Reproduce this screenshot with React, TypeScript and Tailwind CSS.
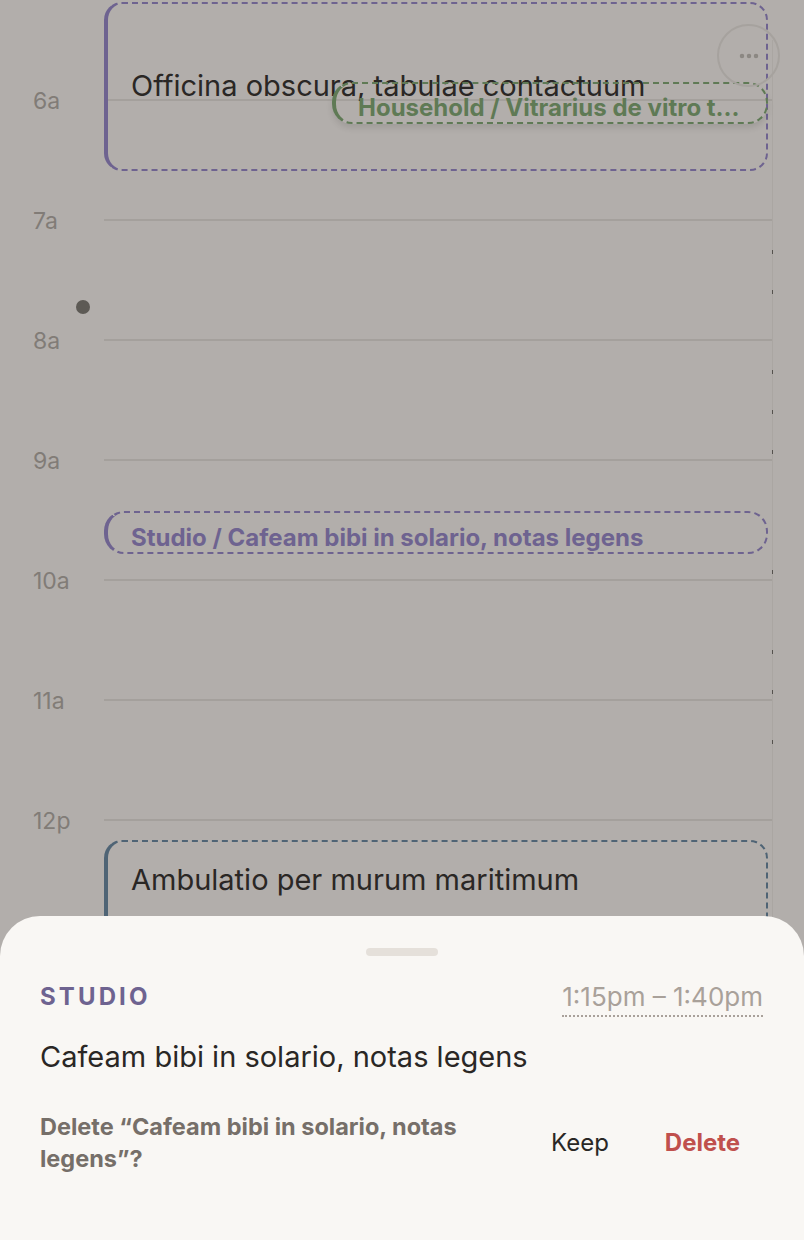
import { MoreHorizontal } from 'lucide-react';

const HOURS = ['6a', '7a', '8a', '9a', '10a', '11a', '12p'];

const font = { fontFamily: 'Inter, "Noto Sans", sans-serif' };

export default function App() {
  return (
    <div className="relative h-[1240px] w-[804px] overflow-hidden bg-[#b2aeab]" style={font}>
      {/* Time grid */}
      <div className="flex flex-col pt-[40px]">
        {HOURS.map((h) => (
          <div key={h} className="flex h-[120px] items-center">
            <div className="w-[104px] pl-[33px] pt-[3px] text-[23px] leading-none text-[#817c77]">{h}</div>
            <div className="h-[2px] w-[668px] bg-[#a4a09c]" />
            <div className="h-full w-px bg-[#aaa6a2]" />
          </div>
        ))}
        <div className="flex h-[240px]">
          <div className="w-[772px]" />
          <div className="h-full w-px bg-[#aaa6a2]" />
        </div>
      </div>

      {/* scroll track ticks */}
      {[250, 290, 370, 410, 450, 570, 650, 690, 740].map((y) => (
        <div
          key={y}
          className="absolute left-[772px] h-[4px] w-px bg-[#55524e]"
          style={{ top: y }}
        />
      ))}

      {/* now dot */}
      <div className="absolute left-[76px] top-[300px] h-[14px] w-[14px] rounded-full bg-[#5d5a55]" />

      {/* Officina event */}
      <EventBox top={2} height={169} left={104} color="#6e6390" radius={18}>
        <div className="pl-[23px] pt-[64px] text-[29px] leading-[36px] text-[#2a2725]">
          Officina obscura, tabulae contactuum
        </div>
      </EventBox>

      {/* Household pill */}
      <EventBox top={82} height={42} left={332} color="#5f7a55" radius={20} shadow>
        <div className="whitespace-nowrap pl-[22px] pt-[9px] text-[24px] font-bold leading-[30px] text-[#5f7a55]">
          Household / Vitrarius de vitro t...
        </div>
      </EventBox>

      {/* more button */}
      <div className="absolute left-[717px] top-[24px] flex h-[63px] w-[63px] items-center justify-center rounded-full border-2 border-[#a6a29e]">
        <MoreHorizontal size={24} strokeWidth={2.5} className="text-[#8b8782]" />
      </div>

      {/* Studio pill */}
      <EventBox top={511} height={43} left={104} color="#6e6390" radius={20}>
        <div className="pl-[23px] pt-[10px] text-[24px] font-bold leading-[30px] text-[#6e6390]">
          Studio / Cafeam bibi in solario, notas legens
        </div>
      </EventBox>

      {/* Ambulatio */}
      <EventBox top={840} height={120} left={104} color="#4f6475" radius={18}>
        <div className="pl-[23px] pt-[20px] text-[29px] leading-[36px] text-[#2a2725]">
          Ambulatio per murum maritimum
        </div>
      </EventBox>

      {/* Bottom sheet */}
      <div className="absolute bottom-0 left-0 right-0 top-[916px] rounded-t-[40px] bg-[#f9f7f4] px-[40px]">
        <div className="mx-auto mt-[32px] h-[8px] w-[72px] rounded-full bg-[#e5e0da]" />
        <div className="mt-[26px] flex items-start justify-between">
          <div className="text-[24px] font-bold uppercase leading-[30px] tracking-[0.13em] text-[#6e6390]">
            Studio
          </div>
          <div className="mr-[1px] border-b-2 border-dotted border-[#a9a19a] pb-[3px] text-[26px] leading-[30px] text-[#a9a19a]">
            1:15pm – 1:40pm
          </div>
        </div>
        <div className="mt-[22px] text-[29px] leading-[36px] text-[#2a2725]">
          Cafeam bibi in solario, notas legens
        </div>
        <div className="mt-[36px] flex items-center">
          <div className="w-[450px] text-[23.5px] font-bold leading-[32px] text-[#766f69]">
            Delete “Cafeam bibi in solario, notas legens”?
          </div>
          <div className="ml-[61px] text-[24px] leading-[30px] text-[#2a2725]">Keep</div>
          <div className="ml-[56px] text-[24px] font-bold leading-[30px] text-[#c0504d]">Delete</div>
        </div>
      </div>
    </div>
  );
}

function EventBox({
  top,
  height,
  left,
  color,
  radius,
  shadow,
  children,
}: {
  top: number;
  height: number;
  left: number;
  color: string;
  radius: number;
  shadow?: boolean;
  children: React.ReactNode;
}) {
  return (
    <div
      className={`absolute overflow-hidden border-2 border-l-4 border-dashed [border-left-style:solid] ${
        shadow ? 'shadow-[0_4px_6px_rgba(0,0,0,0.1)]' : ''
      }`}
      style={{
        top,
        left,
        height,
        width: 768 - left,
        borderColor: color,
        borderRadius: radius,
      }}
    >
      {children}
    </div>
  );
}
